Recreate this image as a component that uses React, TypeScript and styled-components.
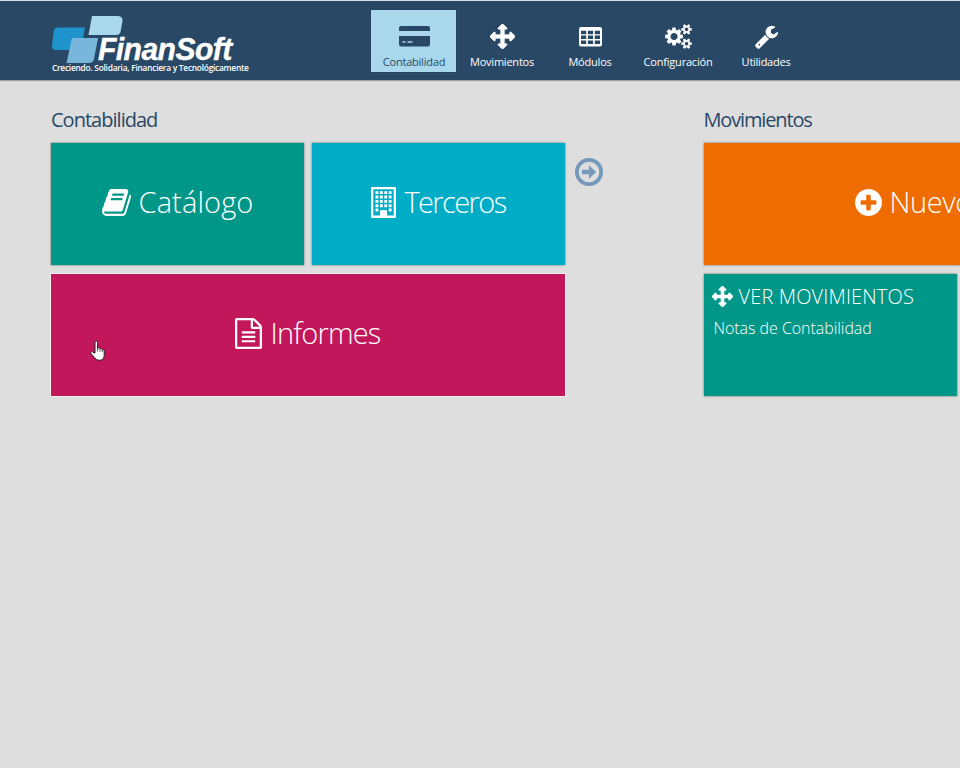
import React from "react";
import styled, { createGlobalStyle } from "styled-components";

const GlobalStyle = createGlobalStyle`
  * { box-sizing: border-box; }
  html, body { margin: 0; padding: 0; overflow: hidden; }
  body { background: #dedede; font-family: "Open Sans", "Noto Sans", sans-serif; }
`;

const Page = styled.div`
  width: 960px;
  height: 768px;
  overflow: hidden;
  position: relative;
  background: #dedede;
`;

const Header = styled.header`
  height: 80px;
  border-top: 1px solid #dcdcdc;
  background: #294866;
  box-shadow: 0 1px 1px rgba(70, 60, 60, 0.4);
  display: flex;
  padding-left: 51px;
`;

const Brand = styled.div`
  width: 320px;
  display: grid;
  padding-top: 15px;
  grid-template-rows: 46px 12px;
`;

const BrandTop = styled.div`
  display: flex;
  align-items: flex-start;
`;

const BrandMark = styled.svg`
  display: block;
  flex: none;
  width: 74px;
  height: 50px;
`;

const BrandName = styled.span`
  margin: 20px 0 0 -27px;
  color: #fff;
  font: italic bold 32px/26px "Liberation Sans", Arial, sans-serif;
  -webkit-text-stroke: 0.4px #fff;
  letter-spacing: -0.6px;
  white-space: nowrap;
  transform: scaleX(0.94);
  transform-origin: 0 50%;
`;

const Tagline = styled.span`
  justify-self: start;
  position: relative;
  color: #fff;
  font: 600 9px/12px "Open Sans", sans-serif;
  letter-spacing: -0.28px;
  white-space: nowrap;
  padding-left: 1px;
  transform: scaleX(0.932);
  transform-origin: 0 50%;
`;

const Nav = styled.nav`
  display: flex;
  gap: 3px;
  padding-top: 9px;
`;

const NavItem = styled.a<{ $active?: boolean }>`
  width: 85px;
  height: 62px;
  padding-left: 1px;
  display: flex;
  flex-direction: column;
  align-items: center;
  background: ${(p) => (p.$active ? "#a9d7ec" : "transparent")};
  color: ${(p) => (p.$active ? "#294866" : "#fff")};
  box-shadow: ${(p) => (p.$active ? "0 0 1px #1d3650" : "none")};
`;

const NavIcon = styled.span`
  height: 42px;
  padding-top: 11px;
  display: flex;
  align-items: center;
  justify-content: center;
`;

const NavLabel = styled.span<{ $spacing: number }>`
  font-size: 11px;
  line-height: 20px;
  letter-spacing: ${(p) => p.$spacing}px;
  white-space: nowrap;
`;

const Board = styled.main`
  display: flex;
  padding: 25px 0 0 51px;
`;

const Group = styled.section`
  width: 514px;
  flex: none;
`;

const GroupTitle = styled.h2<{ $spacing: number }>`
  margin: 0;
  height: 38px;
  color: #294866;
  font-size: 20px;
  font-weight: 400;
  line-height: 30px;
  letter-spacing: ${(p) => p.$spacing}px;
`;

const Tiles = styled.div`
  display: grid;
  grid-template-columns: 253px 253px;
  grid-template-rows: 122px 122px;
  gap: 9px 8px;
`;

const Tile = styled.a<{ $color: string; $wide?: boolean; $hovered?: boolean; $inset?: number }>`
  grid-column: ${(p) => (p.$wide ? "span 2" : "auto")};
  background: ${(p) => p.$color};
  box-shadow: ${(p) => (p.$hovered ? "0 0 0 1px #f6eef1" : "0 0 2px rgba(60, 60, 60, 0.75)")};
  color: #fff;
  display: flex;
  align-items: center;
  justify-content: ${(p) => (p.$inset ? "flex-start" : "center")};
  gap: 8px;
  padding: 0 0 4px ${(p) => p.$inset ?? 0}px;
`;

const TileLabel = styled.span<{ $spacing: number }>`
  font-size: 29px;
  font-weight: 300;
  line-height: 40px;
  letter-spacing: ${(p) => p.$spacing}px;
`;

const ListTile = styled.a`
  background: #009688;
  box-shadow: 0 0 2px rgba(60, 60, 60, 0.75);
  color: #fff;
  padding: 8px;
`;

const ListHeading = styled.div`
  display: flex;
  align-items: center;
  gap: 6px;
  height: 28px;
  font-size: 20px;
  font-weight: 300;
  letter-spacing: 0.15px;
  white-space: nowrap;
`;

const ListLine = styled.div`
  padding: 7px 0 0 2px;
  font-size: 16px;
  font-weight: 300;
  line-height: 22px;
  letter-spacing: -0.05px;
`;

const Side = styled.div`
  width: 138.5px;
  flex: none;
  padding: 53px 0 0 10px;
`;

const Pointer = styled.svg`
  position: absolute;
  left: 89.5px;
  top: 340px;
`;

const Glyph = styled.svg`
  display: block;
  flex: none;
  fill: currentColor;
`;

const range = (n: number) => Array.from({ length: n }, (_, i) => i);

const ArrowsIcon = ({ size }: { size: number }) => (
  <Glyph width={size} height={size} viewBox="0 0 1792 1792">
    <path d="M1792 896q0 26-19 45l-256 256q-19 19-45 19t-45-19-19-45v-128h-384v384h128q26 0 45 19t19 45-19 45l-256 256q-19 19-45 19t-45-19l-256-256q-19-19-19-45t19-45 45-19h128v-384h-384v128q0 26-19 45t-45 19-45-19l-256-256q-19-19-19-45t19-45l256-256q19-19 45-19t45 19 19 45v128h384v-384h-128q-26 0-45-19t-19-45 19-45l256-256q19-19 45-19t45 19l256 256q19 19 19 45t-19 45-45 19h-128v384h384v-128q0-26 19-45t45-19 45 19l256 256q19 19 19 45z" stroke="currentColor" strokeWidth="50" />
  </Glyph>
);

const CardIcon = () => (
  <Glyph width="31" height="21" viewBox="0 0 31 21">
    <path d="M2 0h27q2 0 2 2v3H0V2q0-2 2-2z" />
    <path fillRule="evenodd" d="M0 10h31v8.500q0 2-2 2H2q-2 0-2-2zM3.500 15.300h3v1.400h-3zM8.500 15.300h5v1.400h-5z" />
  </Glyph>
);

const TableIcon = () => (
  <Glyph width="23" height="20" viewBox="0 0 23 20">
    <path
      fillRule="evenodd"
      d={
        "M2 0h19q2 0 2 2v15.500q0 2-2 2H2q-2 0-2-2V2q0-2 2-2z" +
        range(9)
          .map((i) => `M${2 + (i % 3) * 6.9} ${3.7 + Math.floor(i / 3) * 4.9}h5.200v3.500h-5.200z`)
          .join("")
      }
    />
  </Glyph>
);

const smallCog =
  "v140q0 16-149 31-12 27-30 52 51 113 51 138 0 4-4 7-122 71-124 71-8 0-46-47t-52-68q-20 2-30 2t-30-2q-14 21-52 68t-46 47q-2 0-124-71-4-3-4-7 0-25 51-138-18-25-30-52-149-15-149-31v-140q0-16 149-31 13-29 30-52-51-113-51-138 0-4 4-7 4-2 35-20t59-34 30-16q8 0 46 46.500t52 67.500q20-2 30-2t30 2q51-71 92-112l6-2q4 0 124 70 4 3 4 7 0 25-51 138 17 23 30 52 149 15 149 31z";

const CogsIcon = () => (
  <Glyph width="27" height="25" viewBox="-64 0 1920 1792">
    <path
      fillRule="evenodd"
      d="M832 896q0-106-75-181t-181-75-181 75-75 181 75 181 181 75 181-75 75-181zm384-91v185q0 10-7 19.500t-16 10.500l-155 24q-11 35-32 76 34 48 90 115 7 11 7 20 0 12-7 19-23 30-82.500 89.500t-78.500 59.500q-11 0-21-7l-115-90q-37 19-77 31-11 108-23 155-7 24-30 24h-186q-11 0-20-7.500t-10-17.500l-23-153q-34-10-75-31l-118 89q-7 7-20 7-11 0-21-8-144-133-144-160 0-9 7-19 10-14 41-53t47-61q-23-44-35-82l-152-24q-10-1-17-9.500t-7-19.500v-185q0-10 7-19.500t16-10.500l155-24q11-35 32-76-34-48-90-115-7-11-7-20 0-12 7-20 22-30 82-89t79-59q11 0 21 7l115 90q34-18 77-32 11-108 23-154 7-24 30-24h186q11 0 20 7.500t10 17.500l23 153q34 10 75 31l118-89q8-7 20-7 11 0 21 8 144 133 144 160 0 8-7 19-12 16-42 54t-45 60q23 48 34 82l152 23q10 2 17 10.500t7 19.500z"
    />
    {[384, 1408].map((y) => (
      <path
        key={y}
        fillRule="evenodd"
        d={`M1600 ${y}q0-52-38-90t-90-38-90 38-38 90q0 53 37.500 90.500t90.500 37.500 90.500-37.500 37.500-90.500zM1856 ${y - 70}${smallCog}`}
      />
    ))}
  </Glyph>
);

const WrenchIcon = () => (
  <Glyph width="25" height="25" viewBox="0 0 1792 1792">
    <path d="M448 1472q0-26-19-45t-45-19-45 19-19 45 19 45 45 19 45-19 19-45zm644-420l-682 682q-37 37-90 37-52 0-91-37l-106-108q-38-36-38-90 0-53 38-91l681-681q39 98 114.500 173.500t173.500 114.500zm634-435q0 39-23 106-47 134-164.500 217.500t-258.500 83.500q-185 0-316.500-131.500t-131.500-316.500 131.500-316.500 316.500-131.500q58 0 121.500 16.500t107.500 46.500q16 11 16 28t-16 28l-293 169v224l193 107q5-3 79-48.500t135.500-81 70.500-35.500q15 0 23.500 10t8.500 25z" />
  </Glyph>
);

const BookIcon = () => (
  <Glyph width="29" height="27" viewBox="64 128 1664 1536" preserveAspectRatio="none">
    <path d="M1703 478q40 57 18 129l-275 906q-19 64-76.500 107.500t-122.500 43.500h-923q-77 0-148.500-53.500t-99.500-131.500q-24-67-2-127 0-4 3-27t4-37q1-8-3-21.500t-3-19.500q2-11 8-21t16.500-23.500 16.500-23.500q23-38 45-91.500t30-91.500q3-10 .5-30t-.5-28q3-11 17-28t17-23q21-36 42-92t25-90q1-9-2.500-32t.5-28q4-13 22-30.500t22-22.500q19-26 42.500-84.500t27.500-96.500q1-8-3-25.500t-2-26.500q2-8 9-18t18-23 17-21q8-12 16.500-30.500t15-35 16-36 19.500-32 26.500-23.500 36-11.500 47.500 5.500l-1 3q38-9 51-9h761q74 0 114 56t18 130l-274 906q-36 119-71.500 153.500t-128.500 34.500h-869q-27 0-38 15-11 16-1 43 24 70 144 70h923q29 0 56-15.500t35-41.500l300-987q7-22 5-57 38 15 59 43zm-1064 2q-4 13 2 22.500t20 9.500h608q13 0 25.500-9.500t16.500-22.500l21-64q4-13-2-22.500t-20-9.500h-608q-13 0-25.500 9.500t-16.500 22.500zm-83 256q-4 13 2 22.500t20 9.500h608q13 0 25.500-9.500t16.500-22.500l21-64q4-13-2-22.500t-20-9.500h-608q-13 0-25.500 9.500t-16.500 22.500z" />
  </Glyph>
);

const BuildingIcon = () => (
  <Glyph width="25" height="31" viewBox="0 0 25 31">
    <path fillRule="evenodd" d="M1 0h23q1 0 1 1v29q0 1-1 1H1q-1 0-1-1V1q0-1 1-1zM2.300 2.200v26.400h6.700v-5.200h7v5.200h6.700V2.200z" />
    <rect x="9" y="23.400" width="7" height="7" />
    {range(20)
      .filter((i) => i !== 17 && i !== 18)
      .map((i) => (
        <rect key={i} x={4.500 + (i % 4) * 4.400} y={4.200 + Math.floor(i / 4) * 4.350} width="2.900" height="2.900" rx="0.300" />
      ))}
  </Glyph>
);

const DocumentIcon = () => (
  <Glyph width="27" height="31" viewBox="128 0 1536 1792" preserveAspectRatio="none">
    <path d="M1596 380q28 28 48 76t20 88v1152q0 40-28 68t-68 28h-1344q-40 0-68-28t-28-68v-1600q0-40 28-68t68-28h896q40 0 88 20t76 48zm-444-244v376h376q-10-29-22-41l-313-313q-12-12-41-22zm384 1528v-1024h-416q-40 0-68-28t-28-68v-416h-768v1536h1280z" />
    {[768, 1024, 1280].map((y) => (
      <rect key={y} x="512" y={y} width="768" height="128" rx="32" />
    ))}
  </Glyph>
);

const PlusIcon = () => (
  <Glyph width="27" height="27" viewBox="128 128 1536 1536">
    <path d="M1344 960v-128q0-26-19-45t-45-19h-256v-256q0-26-19-45t-45-19h-128q-26 0-45 19t-19 45v256h-256q-26 0-45 19t-19 45v128q0 26 19 45t45 19h256v256q0 26 19 45t45 19h128q26 0 45-19t19-45v-256h256q26 0 45-19t19-45zm320-64q0 209-103 385.500t-279.500 279.500-385.500 103-385.500-103-279.500-279.500-103-385.500 103-385.500 279.500-279.500 385.500-103 385.500 103 279.500 279.500 103 385.500z" />
  </Glyph>
);

const NextIcon = () => (
  <Glyph width="29" height="29" viewBox="0 0 29 29">
    <circle cx="14" cy="14" r="12.200" fill="none" stroke="#7599bb" strokeWidth="3.700" />
    <path fill="#7599bb" d="M7 11.800h6.900V7.300l7.300 6.700-7.300 6.700v-4.500H7z" />
  </Glyph>
);

const navItems = [
  { label: "Contabilidad", icon: <CardIcon />, spacing: -0.22, active: true },
  { label: "Movimientos", icon: <ArrowsIcon size={25} />, spacing: -0.22 },
  { label: "Módulos", icon: <TableIcon />, spacing: -0.2 },
  { label: "Configuración", icon: <CogsIcon />, spacing: -0.2 },
  { label: "Utilidades", icon: <WrenchIcon />, spacing: -0.25 },
];

export default function App() {
  return (
    <Page>
      <GlobalStyle />
      <Header>
        <Brand>
          <BrandTop>
            <BrandMark viewBox="0 0 74 50">
              <path fill="#1f93cb" d="M6.500 11.500H34l-4 22.500H5q-4 0-4-4l1.500-14q.5-4.500 4-4.500z" />
              <path fill="#a9d7ec" d="M41 0h25q6 0 5.500 5l-2 11q-1 3-4 3H37.500z" />
              <path fill="#78b6dc" d="M21 22h26l-4 21q-1 4-5 4H15.500z" />
            </BrandMark>
            <BrandName>FinanSoft</BrandName>
          </BrandTop>
          <Tagline>Creciendo. Solidaria, Financiera y Tecnológicamente</Tagline>
        </Brand>
        <Nav>
          {navItems.map((item) => (
            <NavItem key={item.label} $active={item.active}>
              <NavIcon>{item.icon}</NavIcon>
              <NavLabel $spacing={item.spacing}>{item.label}</NavLabel>
            </NavItem>
          ))}
        </Nav>
      </Header>
      <Board>
        <Group>
          <GroupTitle $spacing={-0.98}>Contabilidad</GroupTitle>
          <Tiles>
            <Tile $color="#009688">
              <BookIcon />
              <TileLabel $spacing={0.1}>Catálogo</TileLabel>
            </Tile>
            <Tile $color="#00acc6">
              <BuildingIcon />
              <TileLabel $spacing={-1.6}>Terceros</TileLabel>
            </Tile>
            <Tile $color="#c2185b" $wide $hovered>
              <DocumentIcon />
              <TileLabel $spacing={-0.8}>Informes</TileLabel>
            </Tile>
          </Tiles>
        </Group>
        <Side>
          <NextIcon />
        </Side>
        <Group>
          <GroupTitle $spacing={-1.15}>Movimientos</GroupTitle>
          <Tiles>
            <Tile $color="#ef6c00" $wide $inset={151}>
              <PlusIcon />
              <TileLabel $spacing={-0.4}>Nuevo</TileLabel>
            </Tile>
            <ListTile>
              <ListHeading>
                <ArrowsIcon size={21} />
                VER MOVIMIENTOS
              </ListHeading>
              <ListLine>Notas de Contabilidad</ListLine>
            </ListTile>
          </Tiles>
        </Group>
      </Board>
      <Pointer width="16" height="22" viewBox="0 0 16 22">
        <path
          fill="#fff"
          stroke="#222"
          strokeWidth="1"
          strokeLinejoin="round"
          d="M5 13V2.500q0-1.500 1.300-1.500t1.300 1.500V8q2-.8 2.400.6 1.800-.6 2.200.8 2-.4 2 1.400v4.500q0 5-5 5-3 0-4.500-2.500L1 13.500q-.6-1.500.6-1.900 1.200-.3 2.200 1.400z"
        />
        <path stroke="#222" strokeWidth="0.800" d="M7.600 8v3.500M10 8.800v3M12.200 9.600v2.400" />
      </Pointer>
    </Page>
  );
}
